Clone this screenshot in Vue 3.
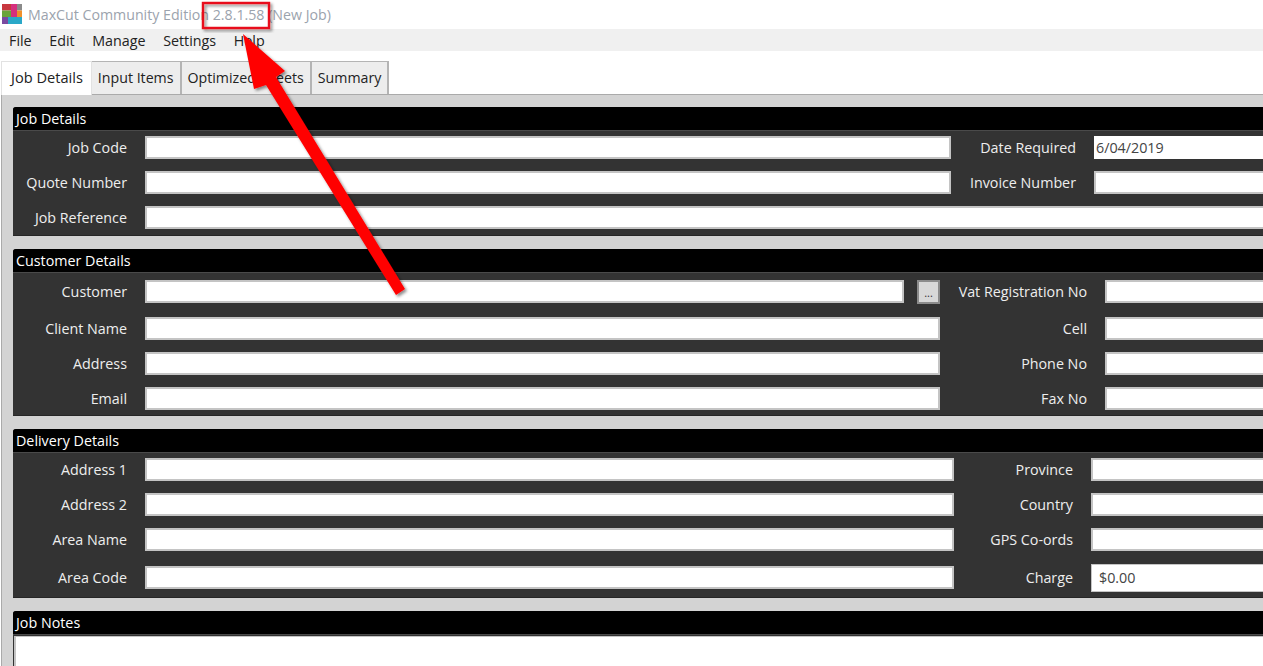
<script setup>
const menus = ['File', 'Edit', 'Manage', 'Settings', 'Help'];
const tabs = ['Job Details', 'Input Items', 'Optimized Sheets', 'Summary'];

const sections = [
	{
		title: 'Job Details',
		cls: 'job',
		rows: [
			{ label: 'Job Code', side: 'Date Required', sideValue: '6/04/2019', flat: true },
			{ label: 'Quote Number', side: 'Invoice Number' },
			{ label: 'Job Reference' },
		],
	},
	{
		title: 'Customer Details',
		cls: 'customer',
		rows: [
			{ label: 'Customer', side: 'Vat Registration No', browse: true },
			{ label: 'Client Name', side: 'Cell' },
			{ label: 'Address', side: 'Phone No' },
			{ label: 'Email', side: 'Fax No' },
		],
	},
	{
		title: 'Delivery Details',
		cls: 'delivery',
		rows: [
			{ label: 'Address 1', side: 'Province' },
			{ label: 'Address 2', side: 'Country' },
			{ label: 'Area Name', side: 'GPS Co-ords' },
			{ label: 'Area Code', side: 'Charge', sideValue: '$0.00', flat: true },
		],
	},
];
</script>

<template>
	<div class="window">
		<div class="titlebar">
			<svg class="logo" width="20" height="20" viewBox="0 0 20 20">
				<rect x="0" y="0" width="9" height="6.5" fill="#c8373f" />
				<rect x="9" y="0" width="6" height="13" fill="#d6307e" />
				<rect x="15" y="0" width="5" height="6.5" fill="#8a8a8a" />
				<rect x="0" y="6.5" width="9" height="6.5" fill="#6aa53a" />
				<rect x="15" y="6.5" width="5" height="6.5" fill="#f0902a" />
				<rect x="0" y="13" width="6" height="7" fill="#7a4aa0" />
				<rect x="6" y="13" width="14" height="7" fill="#2aa8c8" />
			</svg>
			<span>MaxCut Community Edition 2.8.1.58 (New Job)</span>
		</div>
		<div class="menubar">
			<span v-for="m in menus" :key="m" class="menu">{{ m }}</span>
		</div>
		<div class="tabs">
			<div v-for="(t, i) in tabs" :key="t" class="tab" :class="{ active: i === 0 }">{{ t }}</div>
		</div>
		<div class="content">
			<section v-for="s in sections" :key="s.title" class="panel" :class="s.cls">
				<h2>{{ s.title }}</h2>
				<div class="body">
					<div v-for="r in s.rows" :key="r.label" class="row">
						<label>{{ r.label }}</label>
						<div class="input main"></div>
						<div v-if="r.browse" class="browse">...</div>
						<template v-if="r.side">
							<label class="side">{{ r.side }}</label>
							<div class="input value" :class="{ flat: r.flat }">{{ r.sideValue }}</div>
						</template>
					</div>
				</div>
			</section>
			<section class="panel notes">
				<h2>Job Notes</h2>
				<div class="notes-box"></div>
			</section>
		</div>
		<svg class="annotation" width="1263" height="666" viewBox="0 0 1263 666">
			<defs>
				<filter id="shadow" x="-20%" y="-20%" width="140%" height="140%">
					<feDropShadow dx="2" dy="2" stdDeviation="1.5" flood-color="#000" flood-opacity="0.45" />
				</filter>
			</defs>
			<rect x="203" y="3" width="66" height="25" fill="none" stroke="#e8101a" stroke-width="2.4" filter="url(#shadow)" />
			<polygon points="243,34 285,71 276,77 405,289 396,295 266,85 254,89" fill="#f00" filter="url(#shadow)" />
		</svg>
	</div>
</template>

<style>
html,
body {
	margin: 0;
	overflow: hidden;
}
</style>

<style scoped>
.window {
	position: relative;
	width: 1263px;
	height: 666px;
	overflow: hidden;
	background: #fff;
	font-family: 'Open Sans', sans-serif;
	font-size: 14.3px;
	color: #222;
}
.titlebar {
	display: flex;
	align-items: center;
	height: 29px;
	font-size: 14.2px;
	color: #9ba3ad;
}
.logo {
	margin: 0 6px 1px 2px;
}
.menubar {
	display: flex;
	align-items: center;
	gap: 17.6px;
	height: 22px;
	padding-left: 9px;
	background: #f0f0f0;
}
.tabs {
	display: flex;
	height: 33px;
	padding: 10px 0 0 1px;
	font-size: 14.2px;
}
.tab {
	display: flex;
	align-items: center;
	padding: 0 6px 1px;
	border-top: 1px solid #b4b4b4;
	border-right: 2px solid #b4b4b4;
	background: #ededed;
}
.tab.active {
	position: relative;
	z-index: 1;
	padding: 0 8px 4px 9px;
	margin-bottom: -1px;
	background: #fff;
	border-top: 1px solid #e2e2e2;
	border-left: 1px solid #e2e2e2;
	border-right: 1px solid #e2e2e2;
	font-size: 14.6px;
}
.content {
	display: flex;
	flex-direction: column;
	gap: 13px;
	height: 572px;
	box-sizing: border-box;
	margin-left: 1px;
	padding: 12px 0 0 11px;
	background: #d3d3d3;
	border-top: 1px solid #aaa;
	border-left: 1px solid #aaa;
}
.panel {
	flex: none;
	margin-right: -10px;
	background: #333;
	border-radius: 3px 3px 0 0;
	box-shadow: inset 0 -1px #262626;
	overflow: hidden;
}
h2 {
	margin: 0;
	height: 23px;
	padding-left: 3px;
	background: #000;
	box-shadow: 0 1px #4a4a4a;
	color: #fff;
	font-size: 14.3px;
	font-weight: 400;
	line-height: 23px;
}
.body {
	display: flex;
	flex-direction: column;
}
.job .body {
	padding-bottom: 1px;
}
.customer .body {
	padding-top: 2px;
}
.customer .row:first-child {
	margin-bottom: 2px;
}
.delivery .body {
	padding-bottom: 3px;
}
.delivery .row:last-child {
	margin-top: 3px;
}
.row {
	display: flex;
	align-items: center;
	height: 35px;
}
label {
	flex: 0 0 114px;
	text-align: right;
	color: #eee;
}
.input {
	box-sizing: border-box;
	height: 23px;
	background: #fff;
	border: 2px solid #c4c4c4;
}
.main {
	margin-left: 18px;
}
.value {
	flex: 1;
	margin-left: 18px;
	padding-left: 0;
	line-height: 19px;
	color: #444;
}
.flat {
	border-color: #fff;
}
.delivery .flat {
	height: 28px;
	padding-left: 7px;
	border: 1px solid #c4c4c4;
	line-height: 26px;
}
.job .main {
	flex: 0 0 806px;
}
.job .side {
	flex-basis: 125px;
}
.job .row:last-child .main {
	flex: 1;
}
.customer .main {
	flex: 0 0 795px;
}
.customer .row:first-child .main {
	flex-basis: 759px;
}
.customer .side {
	flex-basis: 147px;
}
.delivery .main {
	flex: 0 0 809px;
}
.delivery .side {
	flex-basis: 119px;
}
.browse {
	flex: 0 0 23px;
	box-sizing: border-box;
	height: 24px;
	margin-left: 13px;
	background: #d8d8d8;
	border: 2px solid #8c8c8c;
	color: #333;
	font-size: 11px;
	text-align: center;
	line-height: 22px;
}
.notes-box {
	height: 40px;
	margin: 2px 0 0 1px;
	background: #fff;
	border-left: 2px solid #c4c4c4;
	border-top: 1px solid #c4c4c4;
}
.annotation {
	position: absolute;
	top: 0;
	left: 0;
	pointer-events: none;
}
</style>
